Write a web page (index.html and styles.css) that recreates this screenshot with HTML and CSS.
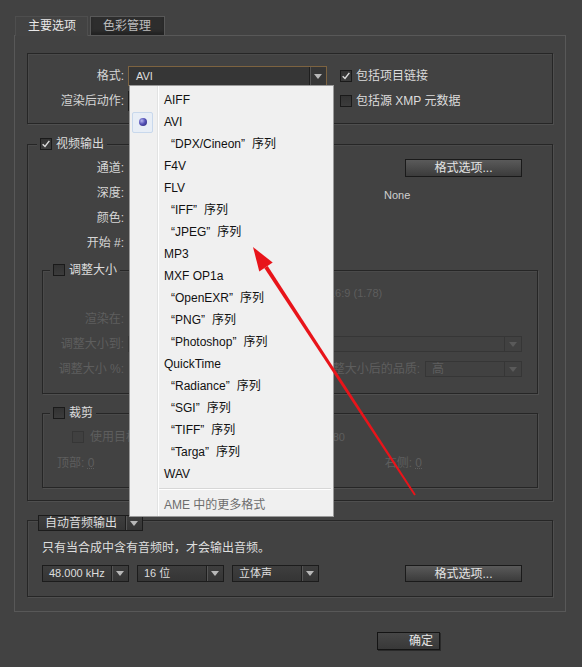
FILE: index.html
```html
<!DOCTYPE html>
<html lang="zh-CN">
<head>
<meta charset="utf-8">
<title>输出模块设置</title>
<link rel="stylesheet" href="styles.css">
</head>
<body>
<div class="dialog">
  <div class="tabs">
    <div class="tab active">主要选项</div>
    <div class="tab">色彩管理</div>
  </div>
  <div class="panel">
    <div class="box fmt">
      <div class="row">
        <span class="lbl">格式:</span>
        <div class="select focus fmt-sel"><span class="val">AVI</span><span class="drop"><i></i></span></div>
        <span class="chk"><span class="cb on"><svg viewBox="0 0 12 12" width="10" height="10"><path d="M2 6.2 L4.8 9 L10 2.2" fill="none" stroke="#dcdcdc" stroke-width="1.7"/></svg></span>包括项目链接</span>
      </div>
      <div class="row">
        <span class="lbl">渲染后动作:</span>
        <div class="select fmt-sel"><span class="val">无</span><span class="drop"><i></i></span></div>
        <span class="chk"><span class="cb"></span>包括源 XMP 元数据</span>
      </div>
    </div>

    <div class="group video">
      <div class="legend"><span class="cb on"><svg viewBox="0 0 12 12" width="10" height="10"><path d="M2 6.2 L4.8 9 L10 2.2" fill="none" stroke="#dcdcdc" stroke-width="1.7"/></svg></span><span>视频输出</span></div>
      <div class="vrows">
        <div class="vrow"><span class="lbl">通道:</span><span class="btn opt">格式选项...</span></div>
        <div class="vrow"><span class="lbl">深度:</span><span class="none">None</span></div>
        <div class="vrow"><span class="lbl">颜色:</span></div>
        <div class="vrow"><span class="lbl">开始 #:</span></div>
      </div>

      <div class="group sub resize">
        <div class="legend"><span class="cb"></span><span>调整大小</span></div>
        <div class="ratio dim">16:9 (1.78)</div>
        <div class="srow first"><span class="lbl2 dim">渲染在:</span></div>
        <div class="srow"><span class="lbl2 dim">调整大小到:</span><div class="select dis wide"><span class="val"></span><span class="drop"><i></i></span></div></div>
        <div class="srow"><span class="lbl2 dim">调整大小 %:</span><span class="qlbl dim">调整大小后的品质:</span><div class="select dis q"><span class="val">高</span><span class="drop"><i></i></span></div></div>
      </div>

      <div class="group sub crop">
        <div class="legend"><span class="cb"></span><span>裁剪</span></div>
        <div class="crow one"><span class="cb dis"></span><span class="dim">使用目标帧大小</span><span class="dim dims">1920x1080</span></div>
        <div class="crow two"><span class="dim">顶部: <u>0</u></span><span class="dim right">右侧: <u>0</u></span></div>
      </div>
    </div>

    <div class="group audio">
      <div class="legend aleg"><div class="select auto"><span class="val">自动音频输出</span><span class="drop"><i></i></span></div></div>
      <div class="note">只有当合成中含有音频时，才会输出音频。</div>
      <div class="arow">
        <div class="select small"><span class="val">48.000 kHz</span><span class="drop"><i></i></span></div>
        <div class="select small"><span class="val">16 位</span><span class="drop"><i></i></span></div>
        <div class="select small"><span class="val">立体声</span><span class="drop"><i></i></span></div>
        <span class="btn opt">格式选项...</span>
      </div>
    </div>
  </div>
  <div class="okbtn">确定</div>
</div>

<div class="menu">
  <div class="item"><span class="ico"></span><span class="txt">AIFF</span></div>
  <div class="item"><span class="ico sel"><b></b></span><span class="txt">AVI</span></div>
  <div class="item"><span class="ico"></span><span class="txt ind">“DPX/Cineon”<span class="gap"></span>序列</span></div>
  <div class="item"><span class="ico"></span><span class="txt">F4V</span></div>
  <div class="item"><span class="ico"></span><span class="txt">FLV</span></div>
  <div class="item"><span class="ico"></span><span class="txt ind">“IFF”<span class="gap"></span>序列</span></div>
  <div class="item"><span class="ico"></span><span class="txt ind">“JPEG”<span class="gap"></span>序列</span></div>
  <div class="item"><span class="ico"></span><span class="txt">MP3</span></div>
  <div class="item"><span class="ico"></span><span class="txt">MXF OP1a</span></div>
  <div class="item"><span class="ico"></span><span class="txt ind">“OpenEXR”<span class="gap"></span>序列</span></div>
  <div class="item"><span class="ico"></span><span class="txt ind">“PNG”<span class="gap"></span>序列</span></div>
  <div class="item"><span class="ico"></span><span class="txt ind">“Photoshop”<span class="gap"></span>序列</span></div>
  <div class="item"><span class="ico"></span><span class="txt">QuickTime</span></div>
  <div class="item"><span class="ico"></span><span class="txt ind">“Radiance”<span class="gap"></span>序列</span></div>
  <div class="item"><span class="ico"></span><span class="txt ind">“SGI”<span class="gap"></span>序列</span></div>
  <div class="item"><span class="ico"></span><span class="txt ind">“TIFF”<span class="gap"></span>序列</span></div>
  <div class="item"><span class="ico"></span><span class="txt ind">“Targa”<span class="gap"></span>序列</span></div>
  <div class="item"><span class="ico"></span><span class="txt">WAV</span></div>
  <div class="sep"></div>
  <div class="item more"><span class="ico"></span><span class="txt">AME 中的更多格式</span></div>
</div>

<svg class="pointer" width="582" height="667" viewBox="0 0 582 667">
  <polygon points="267.7,265.9 415.8,494.5 414.2,495.5 264.3,268.1" fill="#e8141a"/>
  <polygon points="253,247 272.7,262.6 259.3,271.4" fill="#e8141a"/>
</svg>
</body>
</html>
```

FILE: styles.css
```css
* { box-sizing: border-box; margin: 0; padding: 0; }
html, body { width: 582px; height: 667px; overflow: hidden; }
body {
  position: relative;
  background: #424242;
  color: #d4d4d4;
  font: 12px/1 "Liberation Sans", "Noto Sans CJK SC", sans-serif;
}
.dialog { padding-top: 16px; }

.tabs { display: flex; gap: 2px; margin-left: 15px; height: 19px; }
.tab {
  height: 19px;
  padding-left: 12px;
  line-height: 19px;
  border: 1px solid #585858;
  border-bottom: none;
  background: #2d2d2d;
  color: #bdbdbd;
  width: 75px;
  box-shadow: inset 0 -3px 3px rgba(0,0,0,0.25);
}
.tab.active {
  position: relative;
  z-index: 1;
  width: 73px;
  height: 20px;
  background: #434343;
  color: #e8e8e8;
  border-color: #4e4e4e;
  box-shadow: none;
}

.panel {
  margin-left: 14px;
  width: 552px;
  border: 1px solid #585858;
  padding: 17px 12px 14px;
}

.box, .group {
  border: 1px solid #262626;
  box-shadow: 1px 1px 0 #4f4f4f, inset 1px 1px 0 #4a4a4a;
}
.box.fmt { padding: 12px 0; display: flex; flex-direction: column; gap: 5px; }
.row { display: flex; align-items: center; height: 20px; }
.lbl { width: 96px; text-align: right; color: #d6d6d6; }
.select {
  display: flex;
  height: 16px;
  border: 1px solid #1c1c1c;
  background: linear-gradient(#3e3e3e, #353535);
  color: #dedede;
  font-size: 11px;
}
.select .val { flex: 1; padding-left: 6px; display: flex; align-items: center; white-space: nowrap; }
.select .drop {
  width: 17px;
  border-left: 1px solid #1e1e1e;
  box-shadow: inset 1px 0 0 #565656;
  display: flex; align-items: center; justify-content: center;
}
.select .drop i {
  width: 0; height: 0;
  border-left: 4px solid transparent;
  border-right: 4px solid transparent;
  border-top: 5px solid #b8b8b8;
}
.fmt-sel { width: 199px; height: 20px; margin-left: 4px; }
.select.focus { border-color: #7d6340; background: #363636; }
.select.focus .val { padding-left: 7px; }

.chk { display: flex; align-items: center; gap: 4px; margin-left: 13px; color: #dcdcdc; }
.cb {
  width: 12px; height: 12px;
  border: 1px solid #1a1a1a;
  background: linear-gradient(#333, #3c3c3c);
  display: flex; align-items: center; justify-content: center;
  flex: none;
}
.cb.dis { border-color: #363636; background: #404040; }

.group { position: relative; }
.legend {
  display: flex; align-items: center; gap: 4px;
  width: max-content;
  height: 16px;
  margin-top: -9px;
  padding: 0 3px;
  background: #424242;
  color: #dcdcdc;
}
.group.video { margin-top: 20px; padding-bottom: 12px; }
.video > .legend { margin-left: 9px; }
.vrows { margin-top: 6px; display: flex; flex-direction: column; gap: 5px; }
.vrow { display: flex; align-items: center; height: 20px; }
.btn {
  display: flex; align-items: center; justify-content: center;
  height: 18px; width: 117px;
  border: 1px solid #1a1a1a;
  background: linear-gradient(#5a5a5a, #3b3b3b);
  color: #e4e4e4;
}
.vrow .opt { margin-left: auto; margin-right: 30px; }
.none { margin-left: 260px; margin-top: 4px; font-size: 11px; color: #d0d0d0; }

.dim { color: #5e5e5e; }
.group.sub { margin: 0 14px; }
.sub > .legend { margin-left: 7px; }
.group.resize { margin-top: 17px; padding-bottom: 14px; }
.ratio { margin-top: 5px; height: 18px; line-height: 20px; padding-left: 286px; font-size: 11px; }
.srow { display: flex; align-items: center; height: 20px; margin-top: 5px; padding-right: 15px; }
.srow.first { margin-top: 8px; }
.lbl2 { width: 81px; text-align: right; flex: none; }
.select.dis { border-color: #363636; background: #414141; color: #5e5e5e; }
.select.dis .drop { border-left-color: #363636; box-shadow: none; }
.select.dis .drop i { border-top-color: #5a5a5a; }
.select.wide { width: 394px; margin-left: 4px; }
.qlbl { margin-left: auto; }
.select.q { width: 97px; margin-left: 5px; font-size: 12px; }

.group.crop { margin-top: 19px; padding-bottom: 14px; }
.crow { display: flex; align-items: center; height: 20px; margin-top: 6px; }
.crow.one { padding-left: 29px; gap: 6px; }
.dims { margin-left: auto; margin-right: 192px; font-size: 11px; }
.crow.two { padding-left: 14px; }
.right { margin-left: auto; margin-right: 115px; }
u { text-decoration: underline dotted; }

.group.audio { margin-top: 19px; padding-bottom: 14px; }
.aleg { margin-top: -6px; margin-left: 10px; padding: 0; }
.select.auto { width: 105px; font-size: 12px; }
.note { margin-top: 9px; padding-left: 14px; height: 16px; line-height: 16px; color: #dedede; }
.arow { display: flex; align-items: center; gap: 8px; margin-top: 9px; padding-left: 14px; }
.select.small { width: 87px; height: 17px; }
.arow .opt { height: 17px; margin-left: auto; margin-right: 30px; }

.okbtn {
  margin: 20px 0 0 377px;
  width: 63px; height: 18px;
  border: 1px solid #141414;
  background: linear-gradient(#474747, #383838);
  color: #e6e6e6;
  text-align: right;
  padding-right: 6px;
  line-height: 16px;
  box-shadow: 1px 1px 0 #2a2a2a;
}

.menu {
  position: absolute;
  left: 129px; top: 85px;
  width: 205px; height: 432px;
  border: 1px solid #9a9a9a;
  padding-top: 3px;
  background:
    linear-gradient(to right, transparent 27px, #e2e3e3 27px, #e2e3e3 28px, #ffffff 28px, #ffffff 29px, transparent 29px),
    #f0f0f0;
  color: #111;
  font-size: 12px;
  z-index: 5;
}
.item { display: flex; align-items: center; height: 22px; }
.ico { width: 29px; height: 22px; flex: none; display: flex; align-items: center; justify-content: center; }
.ico.sel b {
  display: flex; align-items: center; justify-content: center;
  width: 21px; height: 21px;
  margin-left: -4px;
  border: 1px solid #c8d8ec;
  background: #e8eef6;
  border-radius: 2px;
}
.ico.sel b::after {
  content: "";
  width: 8px; height: 8px; border-radius: 50%;
  background: radial-gradient(circle at 35% 35%, #b8b8f0 0, #5552b8 45%, #27246e 100%);
}
.txt { padding-left: 5px; white-space: nowrap; display: flex; align-items: center; }
.txt.ind { padding-left: 12px; }
.gap { display: inline-block; width: 7px; }
.sep { height: 8px; margin-left: 29px; margin-right: 2px; background: linear-gradient(transparent 3px, #d7d7d7 3px, #d7d7d7 4px, #fff 4px, #fff 5px, transparent 5px); }
.item.more { height: 24px; color: #6d6d6d; }

.pointer { position: absolute; left: 0; top: 0; z-index: 6; pointer-events: none; }
```
